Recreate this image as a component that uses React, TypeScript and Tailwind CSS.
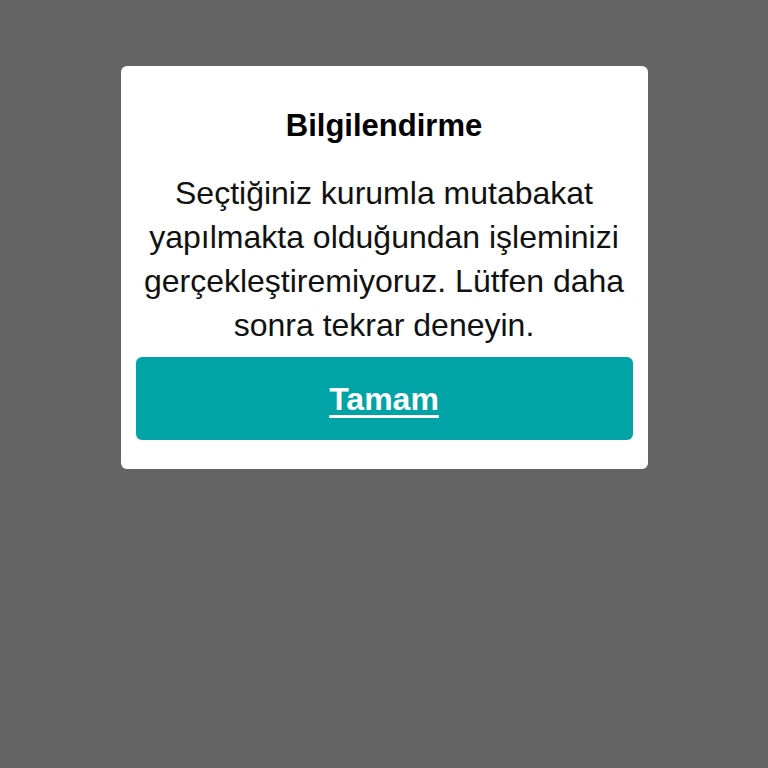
export default function App() {
  return (
    <div className="flex min-h-[768px] w-full justify-center bg-[#646464] pt-[66px] font-['Liberation_Sans',Arial,sans-serif]">
      <div className="flex h-[403px] w-[527px] flex-col items-center rounded-[6px] bg-white px-[15px] pt-[40px] pb-[29px]">
        <h1 className="text-[31px] leading-[40px] font-bold text-black">Bilgilendirme</h1>
        <p className="mt-[25px] px-[4px] text-center text-[32px] leading-[44px] text-[#111]">
          Seçtiğiniz kurumla mutabakat yapılmakta olduğundan işleminizi gerçekleştiremiyoruz. Lütfen daha sonra tekrar deneyin.
        </p>
        <button className="mt-auto flex h-[83px] w-full items-center justify-center rounded-[6px] bg-[#00a4a6] text-[32px] font-bold text-white underline underline-offset-[5px]">
          Tamam
        </button>
      </div>
    </div>
  );
}
